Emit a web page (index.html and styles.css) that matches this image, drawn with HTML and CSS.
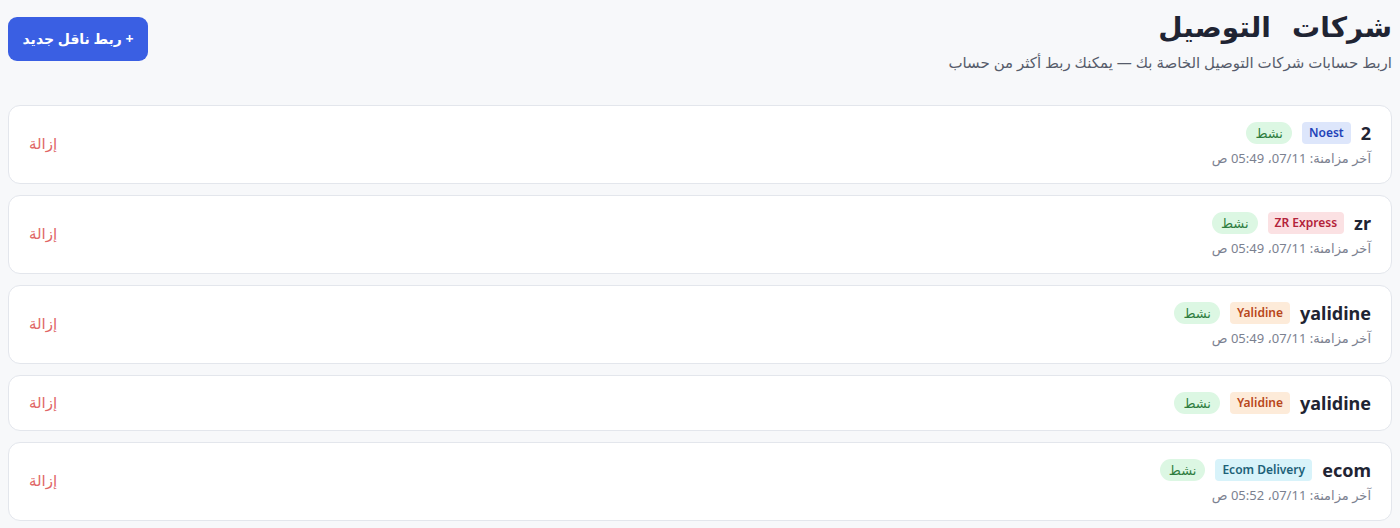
FILE: index.html
```html
<!DOCTYPE html>
<html lang="ar" dir="rtl">
<head>
<meta charset="utf-8">
<link rel="stylesheet" href="styles.css">
</head>
<body>
<div class="page">
  <header class="header">
    <div class="titles">
      <h1 class="title">شركات التوصيل</h1>
      <p class="subtitle">اربط حسابات شركات التوصيل الخاصة بك — يمكنك ربط أكثر من حساب</p>
    </div>
    <button class="add-btn">+ ربط ناقل جديد</button>
  </header>
  <div class="list">
    <div class="card">
      <div class="info">
        <div class="row"><span class="name">2</span><span class="badge b-noest">Noest</span><span class="status">نشط</span></div>
        <div class="sync">آخر مزامنة: 07/11، 05:49 ص</div>
      </div>
      <button class="remove">إزالة</button>
    </div>
    <div class="card">
      <div class="info">
        <div class="row"><span class="name">zr</span><span class="badge b-zr">ZR Express</span><span class="status">نشط</span></div>
        <div class="sync">آخر مزامنة: 07/11، 05:49 ص</div>
      </div>
      <button class="remove">إزالة</button>
    </div>
    <div class="card">
      <div class="info">
        <div class="row"><span class="name">yalidine</span><span class="badge b-yal">Yalidine</span><span class="status">نشط</span></div>
        <div class="sync">آخر مزامنة: 07/11، 05:49 ص</div>
      </div>
      <button class="remove">إزالة</button>
    </div>
    <div class="card">
      <div class="info">
        <div class="row"><span class="name">yalidine</span><span class="badge b-yal">Yalidine</span><span class="status">نشط</span></div>
      </div>
      <button class="remove">إزالة</button>
    </div>
    <div class="card">
      <div class="info">
        <div class="row"><span class="name">ecom</span><span class="badge b-ecom">Ecom Delivery</span><span class="status">نشط</span></div>
        <div class="sync">آخر مزامنة: 07/11، 05:52 ص</div>
      </div>
      <button class="remove">إزالة</button>
    </div>
  </div>
</div>
</body>
</html>
```
FILE: styles.css
```css
* { box-sizing: border-box; }
html, body { margin: 0; padding: 0; }
body {
  background: #f7f8fa;
  font-family: "Noto Sans", "DejaVu Sans", sans-serif;
  color: #1f2433;
}
.page { padding: 8px; }
.header {
  display: flex;
  justify-content: space-between;
  align-items: center;
  margin-bottom: 32px;
}
.title {
  margin: 0;
  font-size: 28px;
  line-height: 36px;
  font-weight: 700;
  word-spacing: 14px;
  color: #1f2433;
}
.subtitle {
  margin: 7px 0 0;
  font-size: 15px;
  line-height: 22px;
  color: #565c6b;
}
.add-btn {
  background: #3a5fe3;
  color: #fff;
  border: none;
  border-radius: 9px;
  height: 44px;
  width: 140px;
  font-family: inherit;
  font-size: 14px;
  font-weight: 700;
  margin-top: -4px;
}
.list { display: flex; flex-direction: column; gap: 11px; }
.card {
  background: #fff;
  border: 1px solid #e3e6ec;
  border-radius: 12px;
  padding: 15px 20px 15px;
  display: flex;
  justify-content: space-between;
  align-items: center;
}
.info { display: flex; flex-direction: column; gap: 3px; }
.row { display: flex; align-items: center; gap: 10px; height: 24px; }
.name { font-size: 18px; font-weight: 700; color: #1f2433; }
.badge {
  font-size: 12px;
  font-weight: 600;
  padding: 2px 7px;
  border-radius: 4px;
  line-height: 18px;
}
.b-noest { background: #dde6fb; color: #2343b8; }
.b-zr { background: #fbe1e3; color: #b3233a; }
.b-yal { background: #fdebd9; color: #b8461a; }
.b-ecom { background: #d8f3fa; color: #1d6178; }
.status {
  background: #dcf7e3;
  color: #2e7d3e;
  font-size: 13px;
  padding: 2px 9px;
  border-radius: 999px;
  line-height: 18px;
}
.sync { font-size: 13px; line-height: 20px; color: #7b8190; }
.remove {
  background: none;
  border: none;
  color: #e06666;
  font-family: inherit;
  font-size: 15px;
  padding: 0;
  margin-top: -3px;
}
```
